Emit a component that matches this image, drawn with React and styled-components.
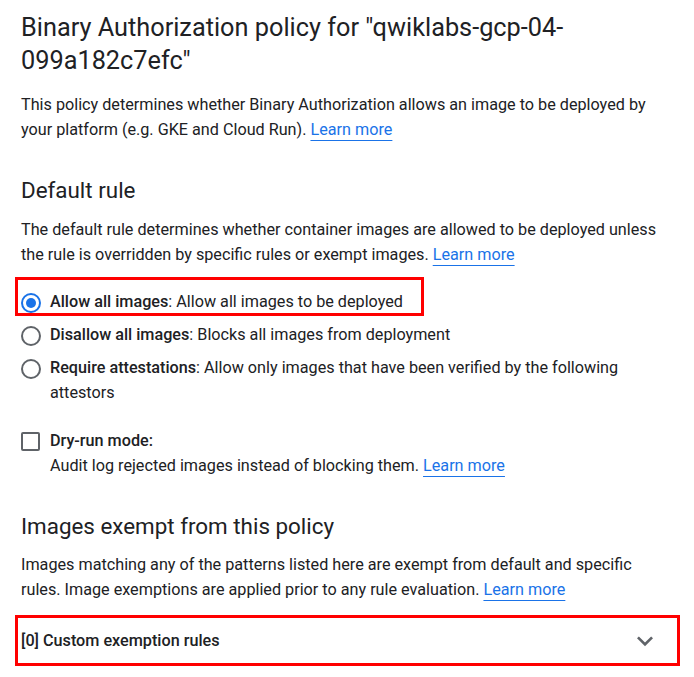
import React from "react";
import styled, { createGlobalStyle } from "styled-components";

const GlobalStyle = createGlobalStyle`
  html, body {
    margin: 0;
    padding: 0;
    background: #ffffff;
  }
  body {
    font-family: Roboto, "Liberation Sans", Arial, sans-serif;
    color: #202124;
    -webkit-font-smoothing: antialiased;
  }
`;

const Page = styled.div`
  width: 694px;
  box-sizing: border-box;
  padding: 12px 20px 20px 21px;
`;

const Title = styled.h1`
  margin: 0;
  font-size: 25.3px;
  line-height: 32.5px;
  font-weight: 400;
  width: 600px;
`;

const Heading = styled.h2`
  margin: ${(p) => p.$top}px 0 0;
  font-size: 22.4px;
  line-height: 28px;
  font-weight: 400;
`;

const Text = styled.p`
  margin: ${(p) => p.$top || 0}px 0 0;
  font-size: 16.2px;
  line-height: 25px;
`;

const Link = styled.a`
  color: #1a73e8;
  text-decoration: underline;
  text-decoration-thickness: 1px;
  text-underline-offset: 5px;
  cursor: pointer;
`;

const Options = styled.div`
  display: flex;
  flex-direction: column;
  gap: 8px;
  margin-top: 22px;
`;

const Option = styled.label`
  position: relative;
  display: flex;
  align-items: flex-start;
  gap: 9px;
  font-size: 16.2px;
  line-height: 25px;
  cursor: pointer;

  ${(p) =>
    p.$marked &&
    `
    align-self: flex-start;
    &::after {
      content: "";
      position: absolute;
      left: -6px;
      right: -21px;
      top: -12px;
      bottom: -2px;
      border: 3px solid #ff0000;
      pointer-events: none;
    }
  `}
`;

const Radio = styled.span`
  flex: none;
  box-sizing: border-box;
  width: 20px;
  height: 20px;
  margin-top: 4px;
  border-radius: 50%;
  border: 2px solid ${(p) => (p.$checked ? "#1a73e8" : "#5f6368")};
  display: flex;
  align-items: center;
  justify-content: center;

  &::before {
    content: "";
    width: 10px;
    height: 10px;
    border-radius: 50%;
    background: ${(p) => (p.$checked ? "#1a73e8" : "transparent")};
  }
`;

const Check = styled.span`
  flex: none;
  box-sizing: border-box;
  width: 19px;
  height: 19px;
  margin: 4px 1px 0 0;
  border: 2px solid #5f6368;
  border-radius: 2px;
`;

const Strong = styled.span`
  font-weight: 500;
`;

const CheckRow = styled(Option)`
  margin-top: 23px;
`;

const Panel = styled.div`
  position: relative;
  margin-top: 16px;
  height: 45px;
  display: flex;
  align-items: center;
  justify-content: space-between;
  font-size: 16.2px;
  font-weight: 500;

  &::after {
    content: "";
    position: absolute;
    left: -6px;
    right: -6px;
    top: -3px;
    bottom: -3px;
    border: 3px solid #ff0000;
    pointer-events: none;
  }
`;

const Chevron = styled.svg`
  width: 32px;
  height: 32px;
  fill: #5f6368;
  margin-right: 13px;
`;

export default function App() {
  return (
    <>
      <GlobalStyle />
      <Page>
        <Title>Binary Authorization policy for "qwiklabs-gcp-04-099a182c7efc"</Title>
        <Text $top={15}>
          This policy determines whether Binary Authorization allows an image to be deployed by
          your platform (e.g. GKE and Cloud Run). <Link>Learn more</Link>
        </Text>

        <Heading $top={34}>Default rule</Heading>
        <Text $top={13}>
          The default rule determines whether container images are allowed to be deployed unless
          the rule is overridden by specific rules or exempt images. <Link>Learn more</Link>
        </Text>

        <Options>
          <Option $marked>
            <Radio $checked />
            <span>
              <Strong>Allow all images</Strong>: Allow all images to be deployed
            </span>
          </Option>
          <Option>
            <Radio />
            <span>
              <Strong>Disallow all images</Strong>: Blocks all images from deployment
            </span>
          </Option>
          <Option>
            <Radio />
            <span>
              <Strong>Require attestations</Strong>: Allow only images that have been verified by
              the following attestors
            </span>
          </Option>
        </Options>

        <CheckRow>
          <Check />
          <span>
            <Strong>Dry-run mode:</Strong>
            <br />
            Audit log rejected images instead of blocking them. <Link>Learn more</Link>
          </span>
        </CheckRow>

        <Heading $top={34}>Images exempt from this policy</Heading>
        <Text $top={12}>
          Images matching any of the patterns listed here are exempt from default and specific
          rules. Image exemptions are applied prior to any rule evaluation. <Link>Learn more</Link>
        </Text>

        <Panel>
          <span>[0] Custom exemption rules</span>
          <Chevron viewBox="0 0 24 24">
            <path d="M16.59 8.59L12 13.17 7.41 8.59 6 10l6 6 6-6z" />
          </Chevron>
        </Panel>
      </Page>
    </>
  );
}
